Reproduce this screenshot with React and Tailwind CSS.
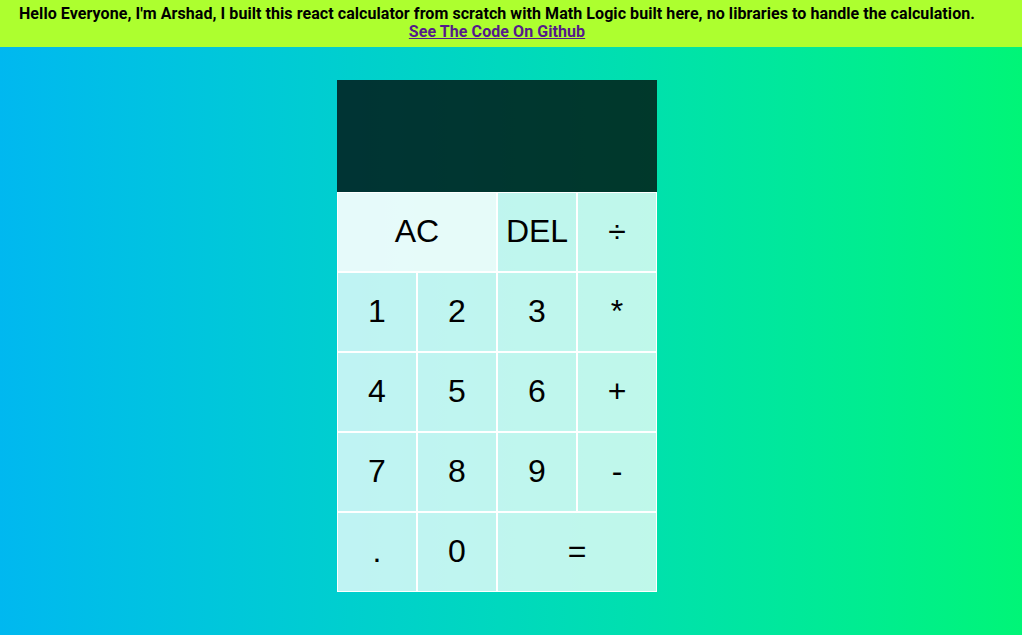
export default function App() {
  const btn =
    "flex items-center justify-center border border-white bg-white/75 pb-[2px] text-[32px] text-black";

  return (
    <div className="w-[1022px] h-[638px] bg-white" style={{ fontFamily: '"Liberation Sans", Arial, sans-serif' }}>
      <header
        className="h-[47px] bg-[#adff2f] pt-[5px] pr-[28px] text-center text-base font-bold leading-[18px] tracking-[0.07px] text-black"
        style={{ fontFamily: "Roboto, sans-serif" }}
      >
        <p>
          Hello Everyone, I'm Arshad, I built this react calculator from scratch with Math Logic built here, no
          libraries to handle the calculation.
        </p>
        <a href="#" className="text-[#551a8b] underline">
          See The Code On Github
        </a>
      </header>

      <main className="flex h-[588px] justify-center bg-linear-to-r from-[#00b8f0] to-[#00f577] pt-[33px] pr-[28px]">
        <div className="grid h-fit grid-cols-[repeat(4,80px)] grid-rows-[112px_repeat(5,80px)]">
          <div className="col-span-4 bg-black/75" />
          <button className={`${btn} col-span-2 bg-white/90`}>AC</button>
          <button className={btn}>DEL</button>
          <button className={btn}>÷</button>
          <button className={btn}>1</button>
          <button className={btn}>2</button>
          <button className={btn}>3</button>
          <button className={btn}>*</button>
          <button className={btn}>4</button>
          <button className={btn}>5</button>
          <button className={btn}>6</button>
          <button className={btn}>+</button>
          <button className={btn}>7</button>
          <button className={btn}>8</button>
          <button className={btn}>9</button>
          <button className={btn}>-</button>
          <button className={btn}>.</button>
          <button className={btn}>0</button>
          <button className={`${btn} col-span-2`}>=</button>
        </div>
      </main>
    </div>
  );
}
